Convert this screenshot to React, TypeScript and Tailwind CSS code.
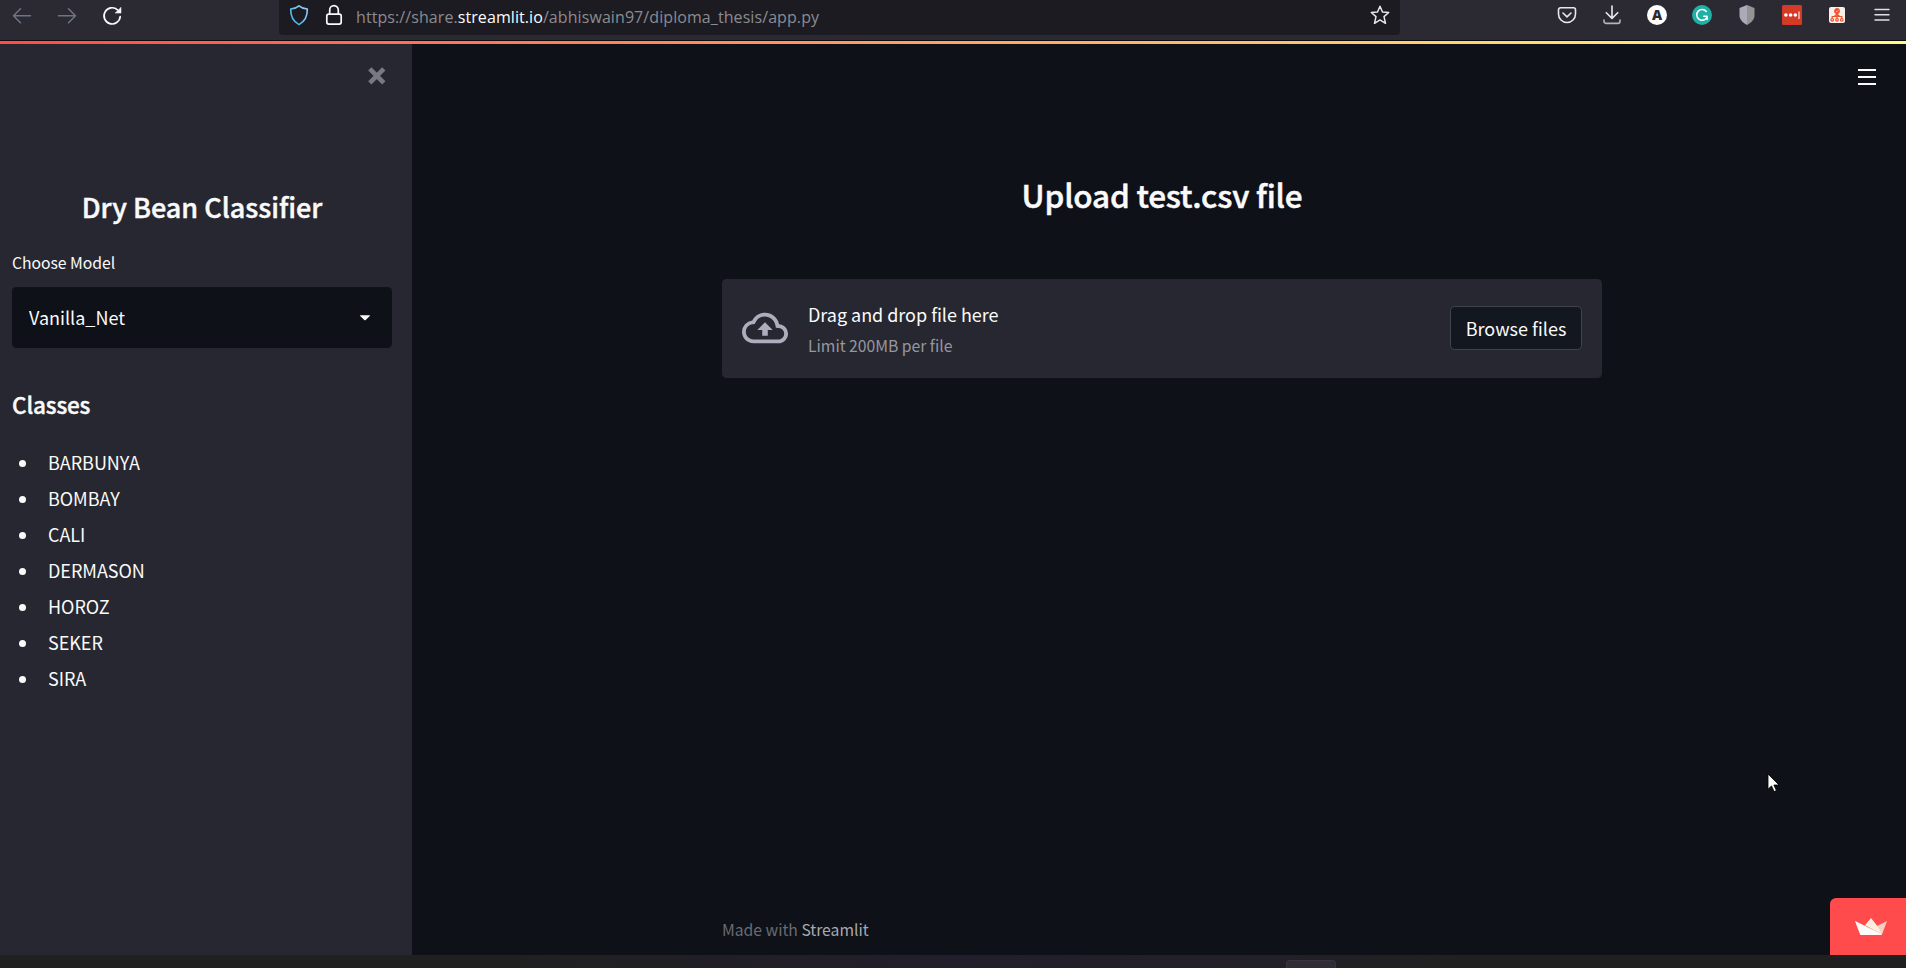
import type { ReactNode } from "react";

const beanClasses = ["BARBUNYA", "BOMBAY", "CALI", "DERMASON", "HOROZ", "SEKER", "SIRA"];

function ToolButton({ label, children }: { label: string; children: ReactNode }) {
  return (
    <button aria-label={label} className="flex h-[22px] w-[22px] items-center justify-center">
      {children}
    </button>
  );
}

function BrowserToolbar() {
  return (
    <header className="flex h-[41px] shrink-0 border-b border-[#0e0e12] bg-[#2b2a33]">
      <nav className="flex w-[279px] items-start gap-[23px] pl-[11px] pt-[5px]">
        <ToolButton label="Back">
          <svg width="22" height="22" viewBox="0 0 22 22" fill="none" stroke="#6f7580" strokeWidth="1.5" strokeLinecap="round" strokeLinejoin="round">
            <path d="M19.5 10.7H2.5M9.5 3.7l-7 7 7 7" />
          </svg>
        </ToolButton>
        <ToolButton label="Forward">
          <svg width="22" height="22" viewBox="0 0 22 22" fill="none" stroke="#6f7580" strokeWidth="1.5" strokeLinecap="round" strokeLinejoin="round">
            <path d="M2.5 10.7H19.5M12.5 3.7l7 7-7 7" />
          </svg>
        </ToolButton>
        <ToolButton label="Reload">
          <svg width="22" height="22" viewBox="0 0 22 22" fill="none" stroke="#fbfbfe" strokeWidth="1.7" strokeLinecap="round">
            <path d="M19.2 11.5a8.1 8.1 0 1 1-2.7-6.7" />
            <path d="M20 2.6v5.5h-5.6z" fill="#fbfbfe" strokeWidth="0.5" strokeLinejoin="round" />
          </svg>
        </ToolButton>
      </nav>

      <div className="flex h-[35px] w-[1121px] items-start rounded-b-[4px] bg-[#1c1b22] pl-[9px] pt-[4px]">
        <svg width="22" height="22" viewBox="0 0 22 22" fill="none" strokeWidth="1.6" strokeLinejoin="round">
          <defs>
            <linearGradient id="shieldStroke" x1="0" y1="1" x2="1" y2="0">
              <stop offset="0" stopColor="#2fb4ea" />
              <stop offset="1" stopColor="#a4cdf7" />
            </linearGradient>
          </defs>
          <path d="M11 1.8c2.3 2 5 2.9 8.3 3.2.2 6.8-1.6 12-8.3 15.6C4.3 17 2.5 11.8 2.7 5 6 4.7 8.7 3.8 11 1.8z" stroke="url(#shieldStroke)" />
        </svg>
        <svg className="ml-[13px]" width="22" height="22" viewBox="0 0 22 22" fill="none" stroke="#fbfbfe" strokeWidth="1.7" strokeLinejoin="round">
          <rect x="3.8" y="10.1" width="14.4" height="10" rx="2" />
          <path d="M6.7 10V5.9a4.3 4.3 0 0 1 8.6 0V10" />
        </svg>
        <p className="ml-[11px] w-[1014px] whitespace-nowrap font-['Open_Sans',sans-serif] text-base leading-[26px] tracking-[0.08px] text-[#8b8b90]">
          https://share.<span className="text-[#fbfbfe]">streamlit.io</span>/abhiswain97/diploma_thesis/app.py
        </p>
        <svg className="mt-[1px]" width="20" height="20" viewBox="0 0 20 20" fill="none" stroke="#e8e8ec" strokeWidth="1.5" strokeLinejoin="round">
          <path d="M10 1.3l2.5 5.7 6.2.5-4.7 4.1 1.5 6.7L10 14.9l-5.5 3.4L6 11.6 1.3 7.5l6.2-.5z" />
        </svg>
      </div>

      <div className="ml-auto flex items-start gap-[23px] pr-[13px] pt-1">
        <ToolButton label="Save to Pocket">
          <svg width="22" height="22" viewBox="0 0 22 22" fill="none" stroke="#e8e8ec" strokeWidth="1.6" strokeLinecap="round" strokeLinejoin="round">
            <path d="M4.5 3.8h13a2 2 0 0 1 2 2v4.2a8.5 8.5 0 0 1-17 0V5.8a2 2 0 0 1 2-2z" />
            <path d="M7 9l4 3.8L15 9" />
          </svg>
        </ToolButton>
        <ToolButton label="Downloads">
          <svg width="22" height="22" viewBox="0 0 22 22" fill="none" stroke="#e8e8ec" strokeWidth="1.6" strokeLinecap="round" strokeLinejoin="round">
            <path d="M11 2v12.2M5.3 8.7l5.7 5.7 5.7-5.7" />
            <path d="M3 16v1.2A2.2 2.2 0 0 0 5.2 19.4h11.6A2.2 2.2 0 0 0 19 17.2V16" stroke="#b4b5bd" />
          </svg>
        </ToolButton>
        <ToolButton label="Account">
          <span className="flex h-5 w-5 items-center justify-center rounded-full bg-white font-['Open_Sans',sans-serif] text-[14px] font-extrabold leading-none text-[#2b2a33]">A</span>
        </ToolButton>
        <ToolButton label="Grammar checker">
          <svg width="22" height="22" viewBox="0 0 22 22" fill="none">
            <circle cx="11" cy="11" r="10" fill="#1fb0a6" />
            <path d="M15.3 7.4A5.4 5.4 0 1 0 15.8 13.6" stroke="#fff" strokeWidth="1.6" strokeLinecap="round" />
            <path d="M12.8 12.3h3.2v3.2" stroke="#fff" strokeWidth="1.6" strokeLinecap="round" strokeLinejoin="round" />
          </svg>
        </ToolButton>
        <ToolButton label="Shield extension">
          <svg width="22" height="22" viewBox="0 0 22 22">
            <path d="M11 1L3.5 4v7.500c0 4 3 7 7.500 9.500z" fill="#a9abb9" />
            <path d="M11 1l7.500 3v7.500c0 4-3 7-7.500 9.500z" fill="#939394" />
          </svg>
        </ToolButton>
        <ToolButton label="Password manager">
          <svg width="22" height="22" viewBox="0 0 22 22">
            <rect x="1" y="1" width="20" height="20" rx="1.5" fill="#d53a27" />
            <circle cx="4.9" cy="11" r="1.8" fill="#fff" />
            <circle cx="9.6" cy="11" r="1.8" fill="#fff" />
            <circle cx="14.3" cy="11" r="1.8" fill="#fff" />
            <path d="M18 7.5v7.5" stroke="#fff" strokeWidth="1" />
          </svg>
        </ToolButton>
        <ToolButton label="Site map extension">
          <svg width="22" height="22" viewBox="0 0 22 22" fill="none" stroke="#f0522d" strokeWidth="1.2">
            <rect x="3" y="3" width="16" height="16" rx="2" fill="#f8efe9" stroke="none" />
            <circle cx="11" cy="7" r="2.3" fill="#f0522d" />
            <path d="M10 7l.8.8 1.5-1.5" stroke="#f8efe9" strokeWidth="0.7" />
            <path d="M11 9.5v5M6.2 14.5v-2h9.6v2M8.5 12.3l2.5-2.3 2.5 2.3" />
            <circle cx="6.2" cy="15.8" r="1.3" />
            <circle cx="11" cy="15.8" r="1.3" />
            <circle cx="15.8" cy="15.8" r="1.3" />
          </svg>
        </ToolButton>
        <ToolButton label="Browser menu">
          <svg width="22" height="22" viewBox="0 0 22 22" stroke="#e0e0e5" strokeWidth="1.4" strokeLinecap="round">
            <path d="M4 5.5h14M4 10.7h14M4 16h14" />
          </svg>
        </ToolButton>
      </div>
    </header>
  );
}

function Sidebar() {
  return (
    <aside className="flex w-[412px] shrink-0 flex-col bg-[#262730] pl-3 pr-5">
      <div className="flex h-[145px] justify-end pr-[5px] pt-[22px]">
        <button aria-label="Close sidebar" className="h-5 w-5">
          <svg width="20" height="20" viewBox="0 0 20 20" stroke="#787982" strokeWidth="4.6">
            <path d="M2.8 2.8l14 14M16.8 2.8l-14 14" />
          </svg>
        </button>
      </div>
      <h1 className="text-center text-[27px] font-medium leading-[36px] [-webkit-text-stroke:0.45px_#fafafa]">
        Dry Bean Classifier
      </h1>
      <label className="mt-[26px] text-[15.75px] leading-6 tracking-[-0.04px]">Choose Model</label>
      <div className="mt-[12px] flex h-[61px] items-center justify-between rounded-[4.5px] bg-[#0e1117] pl-[17px] pr-[21px]">
        <span>Vanilla_Net</span>
        <svg width="12" height="8" viewBox="0 0 12 8" fill="#fafafa">
          <path d="M1.6 1.2h8.8c.5 0 .7.5.4.9L6.7 5.9a1 1 0 0 1-1.4 0L1.2 2.1c-.3-.4-.1-.9.4-.9z" />
        </svg>
      </div>
      <h2 className="mt-[41px] text-[22.5px] font-medium leading-[30px] tracking-[-0.15px] [-webkit-text-stroke:0.4px_#fafafa]">Classes</h2>
      <ul className="mt-[25px] flex flex-col">
        {beanClasses.map((name) => (
          <li key={name} className="flex h-9 items-center pl-[7px] leading-9 tracking-[-0.03px]">
            <span className="mr-[22px] mt-[3px] h-[7px] w-[7px] rounded-full bg-[#fafafa]" />
            {name}
          </li>
        ))}
      </ul>
    </aside>
  );
}

function Uploader() {
  return (
    <section className="mt-[65px] flex h-[99px] items-center rounded-[4.5px] bg-[#262730] px-5 pb-px">
      <svg width="46" height="46" viewBox="0 0 24 24" fill="#acaebd">
        <path d="M19.35 10.04A7.49 7.49 0 0 0 12 4C9.11 4 6.6 5.64 5.35 8.04A5.994 5.994 0 0 0 0 14c0 3.31 2.69 6 6 6h13c2.76 0 5-2.24 5-5 0-2.64-2.05-4.78-4.65-4.96zM19 18H6c-2.21 0-4-1.79-4-4 0-2.05 1.53-3.76 3.56-3.97l1.07-.11.5-.95A5.469 5.469 0 0 1 12 6c2.62 0 4.88 1.86 5.39 4.43l.3 1.5 1.53.11A2.98 2.98 0 0 1 22 15c0 1.65-1.35 3-3 3zM8 13h2.55v3h2.9v-3H16l-4-4-4 4z" />
      </svg>
      <div className="ml-5 flex flex-col gap-[6px] pt-[2px]">
        <span className="leading-7 tracking-[-0.03px]">Drag and drop file here</span>
        <span className="text-[15.75px] leading-6 tracking-[-0.03px] text-[#96979e]">Limit 200MB per file</span>
      </div>
      <button className="ml-auto flex h-[44px] w-[132px] items-center justify-center rounded-[4.5px] border border-[#41434d] bg-[#131720] leading-[42px]">
        Browse files
      </button>
    </section>
  );
}

export default function App() {
  return (
    <div className="relative flex h-[968px] w-[1906px] flex-col overflow-hidden bg-[#0e1117] font-['Noto_Sans_CJK_SC',sans-serif] text-[18px] text-[#fafafa]">
      <BrowserToolbar />
      <div className="h-[3px] shrink-0 bg-[linear-gradient(90deg,#ff4b4b,#fffd80)]" />

      <div className="flex h-[911px] shrink-0">
        <Sidebar />
        <div className="flex grow justify-center pl-[6px]">
          <main className="flex w-[880px] flex-col pt-[130px]">
            <h1 className="text-center text-[31.5px] font-medium leading-10 tracking-[-0.2px] [-webkit-text-stroke:0.5px_#fafafa]">
              Upload test.csv file
            </h1>
            <Uploader />
            <footer className="mb-[13px] mt-auto text-[15.75px] leading-6 tracking-[-0.03px] text-[#696b73]">
              Made with <a className="text-[#a9aab1]">Streamlit</a>
            </footer>
          </main>
        </div>
      </div>

      <div className="flex h-[13px] shrink-0 items-end bg-[linear-gradient(90deg,#202020_0%,#202020_25%,#221e2b_50%,#232028_65%,#202020_78%)] pl-[1286px]">
        <div className="h-2 w-[50px] rounded-t-[4px] border border-b-0 border-[#38353f] bg-[#2f2c36]" />
      </div>

      <button aria-label="Main menu" className="absolute right-[30px] top-[68px] flex h-[18px] w-[18px] flex-col justify-between py-px">
        <span className="h-[2px] w-full bg-[#fafafa]" />
        <span className="h-[2px] w-full bg-[#fafafa]" />
        <span className="h-[2px] w-full bg-[#fafafa]" />
      </button>

      <a aria-label="Hosted with Streamlit" className="absolute bottom-[13px] right-0 flex h-[57px] w-[76px] items-start rounded-tl-[6px] bg-[#ff4b4b] pl-[25px] pt-5">
        <svg width="32" height="17" viewBox="0 0 32 17">
          <path d="M32 3l-10 5-6 2.5 11 6z" fill="#f6cfc4" />
          <path d="M10 7.3L16 0l6.5 8.3L27 16z" fill="#fdf0e0" />
          <path d="M0 3l27 13-.5 1H5.3z" fill="#fdfafa" />
          <path d="M12 9l15 7" stroke="#e8c0b0" strokeWidth="0.7" strokeDasharray="1.5 1" />
        </svg>
      </a>

      <svg className="absolute left-[1767px] top-[773px]" width="14" height="21" viewBox="0 0 14 21">
        <path d="M1 1v15.2l3.5-3.3 2.6 5.7 2.3-1-2.5-5.6H12z" fill="#fff" stroke="#000" strokeWidth="0.8" />
      </svg>
    </div>
  );
}
